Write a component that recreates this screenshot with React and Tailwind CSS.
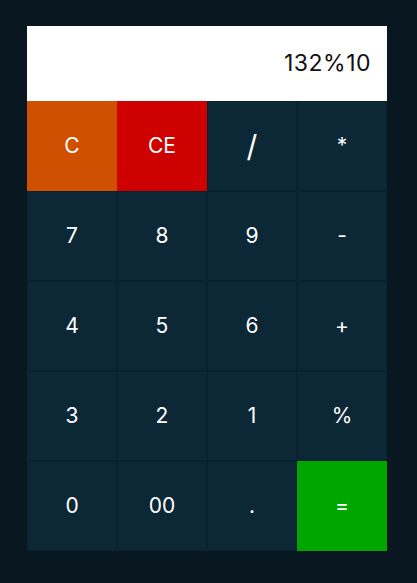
import React from 'react';

const rows = [
  [
    { label: 'C', bg: 'bg-[#cf5000]' },
    { label: 'CE', bg: 'bg-[#cf0000]' },
    { label: '/', size: 'text-[30px]' },
    { label: '*' },
  ],
  [{ label: '7' }, { label: '8' }, { label: '9' }, { label: '-' }],
  [{ label: '4' }, { label: '5' }, { label: '6' }, { label: '+' }],
  [{ label: '3' }, { label: '2' }, { label: '1' }, { label: '%' }],
  [
    { label: '0' },
    { label: '00' },
    { label: '.' },
    { label: '=', bg: 'bg-[#00a600]' },
  ],
];

export default function App() {
  return (
    <div
      className="min-h-screen bg-[#091820] pl-[27px] pt-[26px]"
      style={{ fontFamily: 'Inter, "Open Sans", sans-serif' }}
    >
      <div className="w-[360px]">
        {/* Display */}
        <div className="h-[75px] bg-white flex items-center justify-end pr-[16px] text-[23px] tracking-[0.5px] text-[#111] pb-[1px]">
          132%10
        </div>

        {/* Keys */}
        <div className="grid grid-cols-4">
          {rows.flat().map((key, i) => (
            <button
              key={i}
              className={`h-[90px] flex items-center justify-center text-white border border-[#0a2230] ${
                key.bg ? key.bg + ' border-transparent' : 'bg-[#0c2735]'
              } ${key.size || 'text-[21px]'}`}
            >
              {key.label}
            </button>
          ))}
        </div>
      </div>
    </div>
  );
}
